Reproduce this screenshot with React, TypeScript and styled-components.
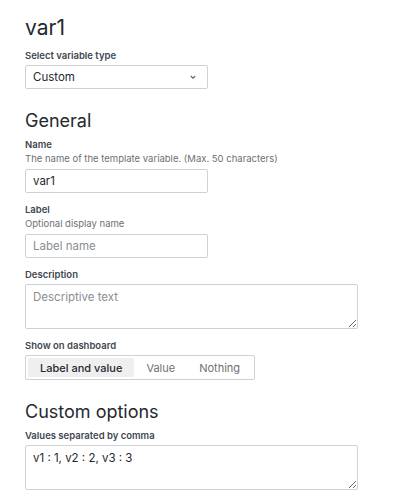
import React from "react";
import styled, { createGlobalStyle } from "styled-components";

const GlobalStyle = createGlobalStyle`
  body {
    margin: 0;
    background: #ffffff;
    font-family: Inter, "Noto Sans", sans-serif;
    color: #24292e;
  }
`;

const App = () => {
  return (
    <>
      <GlobalStyle />
      <Page>
        <Title>var1</Title>
        <Field>
          <Label>Select variable type</Label>
          <SelectBox>
            <SelectValue>Custom</SelectValue>
            <Chevron viewBox="0 0 10 10">
              <path d="M2.8 4 L5 6.2 L7.2 4" />
            </Chevron>
          </SelectBox>
        </Field>

        <SectionTitle>General</SectionTitle>
        <Field>
          <Label>Name</Label>
          <Hint>The name of the template variable. (Max. 50 characters)</Hint>
          <TextInput defaultValue="var1" />
        </Field>
        <Field>
          <Label>Label</Label>
          <Hint>Optional display name</Hint>
          <TextInput placeholder="Label name" />
        </Field>
        <Field>
          <Label>Description</Label>
          <TextArea placeholder="Descriptive text" />
        </Field>
        <Field>
          <Label>Show on dashboard</Label>
          <RadioGroup>
            <RadioOption $active>Label and value</RadioOption>
            <RadioOption>Value</RadioOption>
            <RadioOption>Nothing</RadioOption>
          </RadioGroup>
        </Field>

        <SectionTitle>Custom options</SectionTitle>
        <Field>
          <Label>Values separated by comma</Label>
          <TextArea defaultValue="v1 : 1, v2 : 2, v3 : 3" />
        </Field>
      </Page>
    </>
  );
};

export default App;

const Page = styled.div`
  padding: 15px 25px 0 25px;
  display: flex;
  flex-direction: column;
  align-items: flex-start;
`;

const Title = styled.h1`
  margin: 0 0 10px 0;
  font-size: 21px;
  line-height: 25px;
  font-weight: 400;
  color: #24292e;
`;

const SectionTitle = styled.h2`
  margin: 10px 0 7px 0;
  font-size: 18px;
  line-height: 22px;
  font-weight: 400;
  color: #24292e;
`;

const Field = styled.div`
  display: flex;
  flex-direction: column;
  align-items: flex-start;
  margin-bottom: 11px;
`;

const Label = styled.label`
  font-size: 9.5px;
  line-height: 12px;
  font-weight: 600;
  color: #41474f;
  margin-bottom: 3px;
`;

const Hint = styled.div`
  font-size: 9.5px;
  line-height: 12px;
  color: #6e7075;
  margin: -1px 0 4px 0;
`;

const SelectBox = styled.div`
  box-sizing: border-box;
  width: 183px;
  height: 24px;
  border: 1px solid #cfd1d4;
  border-radius: 2px;
  display: flex;
  align-items: center;
  justify-content: space-between;
  padding: 0 9px 0 7px;
`;

const SelectValue = styled.span`
  font-size: 11.5px;
  color: #24292e;
`;

const Chevron = styled.svg`
  width: 10px;
  height: 10px;
  fill: none;
  stroke: #5f636a;
  stroke-width: 1.1;
`;

const TextInput = styled.input`
  box-sizing: border-box;
  width: 183px;
  height: 24px;
  border: 1px solid #cfd1d4;
  border-radius: 2px;
  padding: 0 7px;
  font-family: Inter, "Noto Sans", sans-serif;
  font-size: 11.5px;
  color: #24292e;
  outline: none;

  &::placeholder {
    color: #8a8d92;
  }
`;

const TextArea = styled.textarea`
  box-sizing: border-box;
  width: 333px;
  height: 45px;
  border: 1px solid #cfd1d4;
  border-radius: 2px;
  padding: 5px 7px;
  font-family: Inter, "Noto Sans", sans-serif;
  font-size: 11.5px;
  color: #24292e;
  outline: none;
  resize: vertical;

  &::placeholder {
    color: #8a8d92;
  }
`;

const RadioGroup = styled.div`
  box-sizing: border-box;
  display: flex;
  height: 25px;
  padding: 2px;
  border: 1px solid #cfd1d4;
  border-radius: 2px;
`;

const RadioOption = styled.div<{ $active?: boolean }>`
  display: flex;
  align-items: center;
  flex-shrink: 0;
  white-space: nowrap;
  padding: 0 12px;
  font-size: 11px;
  font-weight: ${(p) => (p.$active ? 500 : 400)};
  color: ${(p) => (p.$active ? "#24292e" : "#6e7075")};
  background: ${(p) => (p.$active ? "#efefef" : "transparent")};
  border-radius: 1px;
`;
